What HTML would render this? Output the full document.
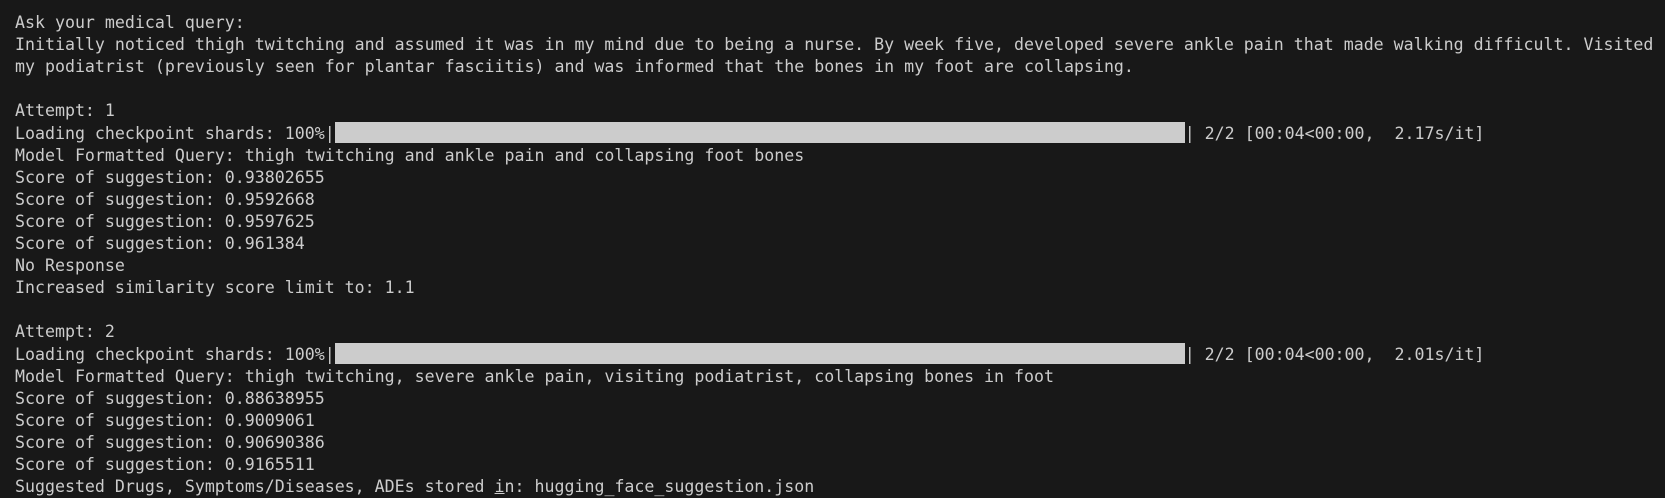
<!DOCTYPE html>
<html><head><style>
html,body{margin:0;padding:0;background:#181818;width:1665px;height:498px;overflow:hidden}
pre{margin:0;position:absolute;left:15px;top:12px;font-family:"DejaVu Sans Mono","Liberation Mono",monospace;font-size:16.6px;line-height:22px;color:#cccccc;white-space:pre}
.bar{display:inline-block;width:850px;height:21px;background:#cccccc;vertical-align:-4px}
.cur{text-decoration:underline}
</style></head><body><pre>Ask your medical query:
Initially noticed thigh twitching and assumed it was in my mind due to being a nurse. By week five, developed severe ankle pain that made walking difficult. Visited
my podiatrist (previously seen for plantar fasciitis) and was informed that the bones in my foot are collapsing.

Attempt: 1
Loading checkpoint shards: 100%|<span class="bar"></span>| 2/2 [00:04&lt;00:00,  2.17s/it]
Model Formatted Query: thigh twitching and ankle pain and collapsing foot bones
Score of suggestion: 0.93802655
Score of suggestion: 0.9592668
Score of suggestion: 0.9597625
Score of suggestion: 0.961384
No Response
Increased similarity score limit to: 1.1

Attempt: 2
Loading checkpoint shards: 100%|<span class="bar"></span>| 2/2 [00:04&lt;00:00,  2.01s/it]
Model Formatted Query: thigh twitching, severe ankle pain, visiting podiatrist, collapsing bones in foot
Score of suggestion: 0.88638955
Score of suggestion: 0.9009061
Score of suggestion: 0.90690386
Score of suggestion: 0.9165511
Suggested Drugs, Symptoms/Diseases, ADEs stored <span class="cur">i</span>n: hugging_face_suggestion.json</pre></body></html>
